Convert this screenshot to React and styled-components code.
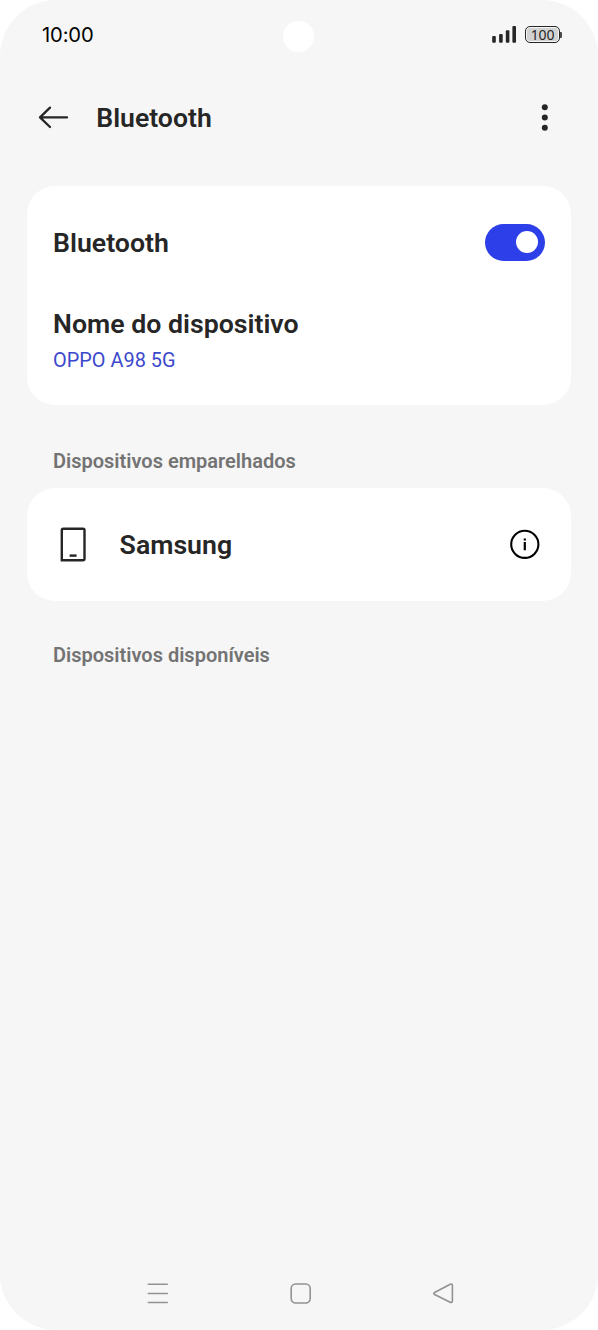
import React from "react";
import styled, { createGlobalStyle } from "styled-components";

const GlobalStyle = createGlobalStyle`
  * { box-sizing: border-box; }
  html, body { margin: 0; background: #fff; }
  h1, h2, p { margin: 0; }
  svg { display: block; flex: none; }
  button { border: 0; padding: 0; background: none; color: inherit; }
`;

const Screen = styled.main`
  width: 598px;
  height: 1330px;
  display: flex;
  flex-direction: column;
  background: #f6f6f6;
  border-radius: 56px;
  overflow: hidden;
  font-family: Roboto, sans-serif;
  color: #262626;
`;

const StatusBar = styled.header`
  height: 70px;
  display: grid;
  grid-template-columns: 1fr 32px 1fr;
  padding: 0 36px 0 42px;
`;

const Clock = styled.span`
  padding-top: 21px;
  font: 430 20.2px/28px Inter, sans-serif;
  letter-spacing: -0.15px;
  color: #000;
`;

const Camera = styled.span`
  width: 31.5px;
  height: 31.5px;
  margin: 20.8px 0 0 -3.2px;
  border-radius: 50%;
  background: #fff;
`;

const StatusIcons = styled.div`
  display: flex;
  justify-content: flex-end;
  gap: 8px;
  padding-top: 25px;
`;

const Battery = styled.div`
  display: flex;
  align-items: center;
  height: 19px;

  &::after {
    content: "";
    width: 2px;
    height: 6px;
    background: #4a4a4a;
    border-radius: 0 1px 1px 0;
  }
`;

const BatteryLevel = styled.span`
  width: 35px;
  height: 17px;
  border: 1.5px solid #262626;
  border-radius: 5px;
  background: #d2d2d2;
  box-shadow: inset 0 0 0 1px #f6f6f6;
  font: 400 14px/15px "Noto Sans", sans-serif;
  letter-spacing: -0.2px;
  text-align: center;
`;

const TitleBar = styled.div`
  height: 95px;
  display: flex;
  align-items: center;
  padding: 0 46px 0 38px;
`;

const Title = styled.h1`
  flex: 1;
  margin-left: 27.3px;
  font-size: 26.6px;
  line-height: 32px;
  font-weight: 600;
`;

const Card = styled.section`
  flex: none;
  width: 544.5px;
  height: ${(p) => p.$height}px;
  margin: ${(p) => p.$top}px 0 0 26.8px;
  padding: 0 26.3px;
  border-radius: 28px;
  background: #fff;
`;

const Row = styled.div`
  display: flex;
  align-items: center;
  height: ${(p) => p.$height}px;
`;

const NameBlock = styled.div`
  padding-top: 8px;
`;

const Label = styled.h2`
  flex: 1;
  padding-top: 1px;
  font-size: 26.7px;
  line-height: 32px;
  font-weight: 600;
`;

const DeviceName = styled.p`
  margin-top: 8px;
  font-size: 19.9px;
  line-height: 26px;
  color: #3c49cc;
`;

const Toggle = styled.button`
  width: 60px;
  height: 37px;
  display: flex;
  align-items: center;
  justify-content: flex-end;
  padding-right: 7px;
  border-radius: 19px;
  background: #2d3fe8;
`;

const Knob = styled.span`
  width: 22px;
  height: 22px;
  border-radius: 50%;
  background: #fff;
`;

const SectionTitle = styled.h2`
  padding-left: 53px;
  margin-top: ${(p) => p.$top}px;
  font-size: 20px;
  line-height: 26px;
  font-weight: 600;
  color: #737373;
`;

const DeviceIcon = styled.svg`
  margin: 0 32.5px 0 7px;
`;

const InfoIcon = styled.svg`
  margin-right: 5px;
`;

const NavBar = styled.nav`
  margin-top: auto;
  height: 73px;
  display: flex;
  justify-content: space-between;
  align-items: center;
  padding: 0 143px 0 146px;
`;

export default function App() {
  return (
    <>
      <GlobalStyle />
      <Screen>
        <StatusBar>
          <Clock>10:00</Clock>
          <Camera />
          <StatusIcons>
            <svg width="25" height="19" fill="#262626">
              <rect x="0.2" y="11" width="3.6" height="6.7" rx="1" />
              <rect x="7.1" y="9" width="3.6" height="8.7" rx="1" />
              <rect x="13.8" y="5.2" width="3.6" height="12.5" rx="1" />
              <rect x="20.4" y="1" width="3.6" height="16.7" rx="1" />
            </svg>
            <Battery>
              <BatteryLevel>100</BatteryLevel>
            </Battery>
          </StatusIcons>
        </StatusBar>

        <TitleBar>
          <svg width="31" height="25" fill="none" stroke="#262626" strokeWidth="2.3" strokeLinecap="round" strokeLinejoin="round">
            <path d="M12 2.6 2 12.4l10 9.6M2 12.4h27" />
          </svg>
          <Title>Bluetooth</Title>
          <svg width="14" height="29" fill="#262626">
            <circle cx="6.8" cy="4.2" r="3" />
            <circle cx="6.8" cy="14.5" r="3" />
            <circle cx="6.8" cy="24.7" r="3" />
          </svg>
        </TitleBar>

        <Card $top={20.7} $height={219.5}>
          <Row $height={113}>
            <Label>Bluetooth</Label>
            <Toggle aria-label="Bluetooth">
              <Knob />
            </Toggle>
          </Row>
          <NameBlock>
            <Label>Nome do dispositivo</Label>
            <DeviceName>OPPO A98 5G</DeviceName>
          </NameBlock>
        </Card>

        <SectionTitle $top={42.7}>Dispositivos emparelhados</SectionTitle>
        <Card $top={14} $height={112.8}>
          <Row $height={112.5}>
            <DeviceIcon width="27" height="35" fill="none" stroke="#262626" strokeWidth="2.4">
              <path d="M1.8 33.3V3.3Q1.8 1.8 3.3 1.8H23Q24.5 1.8 24.5 3.3V31.8Q24.5 33.3 23 33.3Z" />
              <path d="M9.6 28.6h7" />
            </DeviceIcon>
            <Label>Samsung</Label>
            <InfoIcon width="31" height="31" fill="none" stroke="#000">
              <circle cx="15.8" cy="15.3" r="13.6" strokeWidth="2.1" />
              <path d="M15.8 13v8.2M15.8 9.4v2.1" strokeWidth="2.2" />
            </InfoIcon>
          </Row>
        </Card>
        <SectionTitle $top={41.5}>Dispositivos disponíveis</SectionTitle>

        <NavBar>
          <svg width="24" height="24" stroke="#929292" strokeWidth="1.6" strokeLinecap="round">
            <path d="M2.3 2.3h19M2.3 11.5h19M2.3 20.5h19" />
          </svg>
          <svg width="24" height="24" fill="none" stroke="#929292" strokeWidth="1.6">
            <rect x="2.2" y="2" width="19" height="19" rx="4.5" />
          </svg>
          <svg width="24" height="24" fill="none" stroke="#929292" strokeWidth="1.6" strokeLinejoin="round">
            <path d="M3.6 10.5 19.2 2.3Q21.4 1.5 21.4 3.5V18.8Q21.4 21 19.2 20.2L3.6 12.5Q2 11.5 3.6 10.5Z" />
          </svg>
        </NavBar>
      </Screen>
    </>
  );
}
